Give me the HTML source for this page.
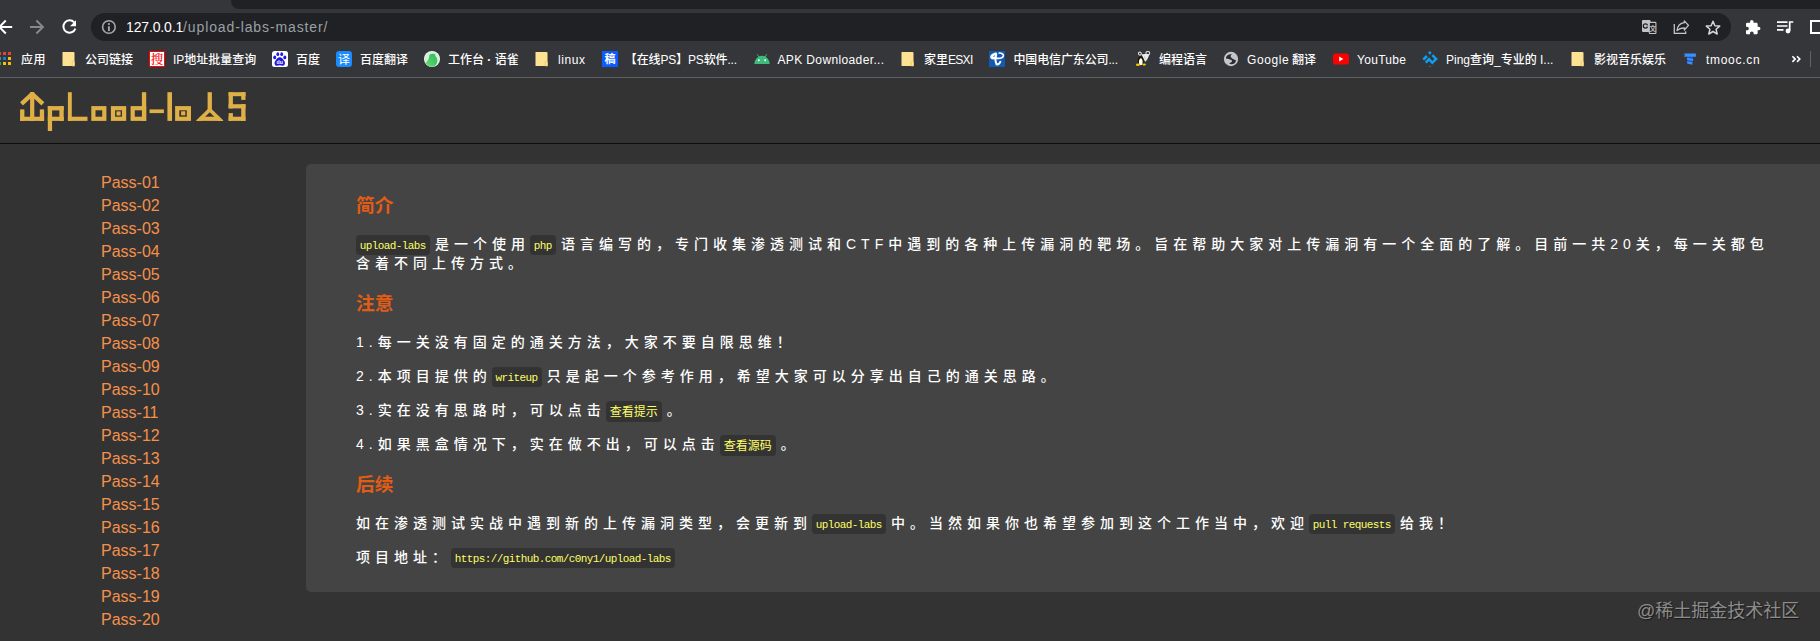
<!DOCTYPE html>
<html lang="zh-CN">
<head>
<meta charset="utf-8">
<title>upload-labs</title>
<style>
html,body{margin:0;padding:0;}
body{width:1820px;height:641px;overflow:hidden;background:#333333;position:relative;font-family:"Liberation Sans","Noto Sans CJK SC",sans-serif;}
.abs{position:absolute;}
/* ---------- browser chrome ---------- */
#chrome{position:absolute;left:0;top:0;width:1820px;height:78px;background:#35363a;}
#tabstrip{position:absolute;left:231px;top:0;width:1589px;height:9px;background:#202124;border-bottom-left-radius:8px;}
#omni{position:absolute;left:91px;top:13px;width:1640px;height:28px;border-radius:14px;background:#202124;}
#url{position:absolute;left:126px;top:18px;font-size:14px;line-height:18px;color:#9aa0a6;white-space:nowrap;letter-spacing:0px;}
#url b{font-weight:normal;color:#ffffff;letter-spacing:-.15px;}
#url span{letter-spacing:.88px;}
#bmline{position:absolute;left:0;top:77px;width:1820px;height:1px;background:#5f6064;}
.bm{position:absolute;top:52px;height:17px;line-height:17px;font-size:12px;font-weight:500;color:#ffffff;white-space:nowrap;font-family:"Liberation Sans","Noto Sans CJK SC",sans-serif;}
.ic{position:absolute;top:51px;width:16px;height:16px;}
.sou{box-sizing:border-box;border:1px solid #ff0000;background:#fff;color:#ff0000;font-size:12.500px;line-height:14px;text-align:center;font-family:"Noto Serif CJK SC","Noto Sans CJK SC",serif;font-weight:500;overflow:hidden;}
.yi{background:#1a8cff;border-radius:3px;color:#fff;font-size:12px;line-height:15px;text-align:center;font-family:"Noto Sans CJK SC",sans-serif;}
.gao{background:#0a5cff;color:#fff;font-size:11px;font-weight:700;line-height:15px;text-align:center;font-family:"Noto Sans CJK SC",sans-serif;}
/* ---------- page ---------- */
#head{position:absolute;left:0;top:78px;width:1820px;height:65px;background:#333333;border-bottom:1px solid #0d0d0d;}
#menu{position:absolute;left:101px;top:171px;margin:0;padding:0;list-style:none;}
#menu li{height:23px;line-height:23px;font-size:16px;color:#f3914b;white-space:nowrap;}
#panel{position:absolute;left:306px;top:164px;width:1530px;height:428px;background:#444444;border-radius:5px;}
#panel h3{position:absolute;left:50px;margin:0;font-size:18.720px;line-height:24px;color:#e35c14;font-weight:bold;font-family:"Liberation Sans","Noto Sans CJK SC",sans-serif;}
#panel p{position:absolute;left:50px;margin:0;font-size:14px;line-height:20px;font-weight:500;color:#ffffff;letter-spacing:5px;white-space:nowrap;}
code{font-family:"Liberation Mono","Noto Sans CJK SC",monospace;font-weight:400;font-size:11px;letter-spacing:-.6px;color:#ffff66;background:#333333;border-radius:4px;padding:4.830px 4.300px 2.900px 3.700px;margin-right:5px;}
code.zh{font-size:12px;letter-spacing:0;padding:5px 4px 1.500px 4px;vertical-align:-1px;}
#wm{position:absolute;left:1637px;top:599px;font-size:18px;line-height:24px;color:#8c8c8c;white-space:nowrap;text-shadow:1px 1px 1px rgba(0,0,0,.55);}
</style>
</head>
<body>
<div id="chrome">
  <div id="tabstrip"></div>
  <div id="omni"></div>
  <div id="url"><b>127.0.0.1</b><span>/upload-labs-master/</span></div>
  <svg class="abs" style="left:0;top:0" width="1820" height="44" viewBox="0 0 1820 44" fill="none">
    <!-- back -->
    <path d="M12.200 27H-0.500M5.800 20.500L-0.700 27l6.500 6.500" stroke="#ffffff" stroke-width="2"/>
    <!-- forward -->
    <path d="M30 27h12.600M36.400 20.500l6.500 6.500l-6.500 6.500" stroke="#85888c" stroke-width="2"/>
    <!-- reload -->
    <path d="M74.200 22.300A6.200 6.200 0 1 0 75.400 28.700" stroke="#ffffff" stroke-width="2"/>
    <path d="M76 20.300v6h-6z" fill="#ffffff"/>
    <!-- info -->
    <circle cx="108.900" cy="27" r="6.300" stroke="#a4a8ad" stroke-width="1.600"/>
    <path d="M108.900 26.300v4.800" stroke="#a4a8ad" stroke-width="1.900"/><circle cx="108.900" cy="24.100" r="1.050" fill="#a4a8ad"/>
    <!-- translate -->
    <rect x="1642" y="20" width="8.600" height="12" rx="1.100" fill="#c1c3c6"/>
    <circle cx="1645.400" cy="26" r="2.100" stroke="#202124" stroke-width="1.300"/>
    <rect x="1646.400" y="25.300" width="2.200" height="1.300" fill="#c1c3c6"/>
    <rect x="1649.300" y="22.400" width="6.600" height="11.100" rx=".6" fill="#202124" stroke="#c1c3c6" stroke-width="1.100"/>
    <text x="1649.500" y="31.300" font-family="Noto Sans CJK SC, sans-serif" font-size="6.500" font-weight="700" fill="#c1c3c6">文</text>
    <!-- share -->
    <path d="M1674.300 23.900v9.400h11.400v-2" stroke="#c4c7cb" stroke-width="1.250"/>
    <path d="M1677 30.600c.5-4.200 3-7.400 7.300-7.900v-1.900l4.200 4.600l-4.200 4.600v-2.200c-3.200 0-5.400.8-7.300 2.800z" stroke="#c4c7cb" stroke-width="1.250" stroke-linejoin="round"/>
    <!-- star -->
    <path d="M1713 21.300l1.900 4.400l4.800.4l-3.600 3.200l1.100 4.700l-4.200-2.500l-4.200 2.500l1.100-4.700l-3.600-3.200l4.800-.4z" stroke="#d3d5d9" stroke-width="1.500" stroke-linejoin="round"/>
    <!-- puzzle -->
    <svg x="1744.600" y="19.200" width="16.500" height="16.500" viewBox="0 0 24 24"><path d="M20.500 11H19V7c0-1.100-.9-2-2-2h-4V3.500C13 2.120 11.880 1 10.500 1S8 2.120 8 3.500V5H4c-1.100 0-1.990.9-1.990 2v3.800H3.500c1.490 0 2.700 1.210 2.700 2.700s-1.210 2.700-2.700 2.700H2V20c0 1.100.9 2 2 2h3.800v-1.500c0-1.490 1.210-2.700 2.700-2.700 1.490 0 2.700 1.210 2.700 2.700V22H17c1.100 0 2-.9 2-2v-4h1.500c1.380 0 2.500-1.120 2.500-2.500S21.880 11 20.500 11z" fill="#ffffff"/></svg>
    <!-- playlist -->
    <path d="M1777 22.200h10.500M1777 26h10.500M1777 29.800h6.500" stroke="#ffffff" stroke-width="1.700"/>
    <path d="M1789.700 21.300v9.500M1789 22h4.300" stroke="#ffffff" stroke-width="1.700"/>
    <circle cx="1788" cy="31" r="2.400" fill="#ffffff"/>
    <!-- side panel -->
    <rect x="1811" y="21" width="14" height="12" stroke="#ffffff" stroke-width="2"/>
  </svg>
  <div id="bmline"></div>
  <!-- bookmarks -->
  <svg class="ic" style="left:-2px" viewBox="0 0 16 16"><g>
    <rect x="0" y="1" width="3" height="3" fill="#ea4335"/><rect x="5" y="1" width="3" height="3" fill="#ea4335"/><rect x="10" y="1" width="3" height="3" fill="#ea4335"/>
    <rect x="0" y="6" width="3" height="3" fill="#34a853"/><rect x="5" y="6" width="3" height="3" fill="#1a73e8"/><rect x="10" y="6" width="3" height="3" fill="#fbbc04"/>
    <rect x="0" y="11" width="3" height="3" fill="#34a853"/><rect x="5" y="11" width="3" height="3" fill="#fbbc04"/><rect x="10" y="11" width="3" height="3" fill="#fbbc04"/></g></svg>
  <span class="bm" style="left:21px;letter-spacing:.5px">应用</span>
  <svg class="ic fo" style="left:60.400px" viewBox="0 0 16 16"><path d="M3 1h10.500a1 1 0 0 1 1 1v12.500a.5.500 0 0 1-.5.500H3a.5.500 0 0 1-.5-.5V1.500A.5.500 0 0 1 3 1z" fill="#fde293"/><path d="M12.200 10.700h2.300v4.300h-2.300z" fill="#fde9a9" stroke="#e6c25c" stroke-width=".7"/></svg>
  <span class="bm" style="left:85px">公司链接</span>
  <span class="ic sou" style="left:149px">搜</span>
  <span class="bm" style="left:173px">IP地址批量查询</span>
  <svg class="ic" style="left:272px" viewBox="0 0 16 16"><rect width="16" height="16" rx="2.500" fill="#fff"/><g fill="#2319dc"><ellipse cx="2.700" cy="6.400" rx="1.500" ry="1.850"/><ellipse cx="5.800" cy="3.200" rx="1.400" ry="1.900"/><ellipse cx="9.700" cy="3.200" rx="1.400" ry="1.900"/><ellipse cx="12.800" cy="6.400" rx="1.500" ry="1.850"/><path d="M7.750 6.200c2 0 3 1.600 4.200 3.200c1.600 1.800 1.500 5.300-1.600 5.300c-1 0-1.700-.4-2.600-.4s-1.600.4-2.600.4c-3.100 0-3.200-3.500-1.600-5.300C4.750 7.800 5.750 6.200 7.750 6.200z"/></g><text x="7.750" y="13.200" text-anchor="middle" font-family="Liberation Sans, sans-serif" font-size="5.200" font-weight="bold" fill="#fff">du</text></svg>
  <span class="bm" style="left:296px">百度</span>
  <span class="ic yi" style="left:336px">译</span>
  <span class="bm" style="left:360px">百度翻译</span>
  <svg class="ic" style="left:424px" viewBox="0 0 16 16"><defs><clipPath id="yq"><circle cx="8" cy="8" r="7.700"/></clipPath><linearGradient id="yg" x1="0" y1="1" x2="1" y2="0"><stop offset="0" stop-color="#74e07f"/><stop offset=".55" stop-color="#45c863"/><stop offset="1" stop-color="#3bbd5b"/></linearGradient></defs><circle cx="8" cy="8" r="8" fill="#eef9f0"/><circle cx="8" cy="8" r="7.300" fill="#d5f1dc"/><path clip-path="url(#yq)" d="M5.600 3.400C7 2.600 9.500 2.400 11.200 3.200C11 4.200 11.400 5 12 5.800C13 7.200 13.600 9 13.200 11C12.700 13.600 10.800 15.400 8.400 16.200C5.400 16.600 2.400 15.200 .8 12.600C2.600 11 4.200 9 4.800 7.200C5.200 5.800 5 4.600 5.600 3.400z" fill="url(#yg)"/></svg>
  <span class="bm" style="left:448px">工作台 <b>·</b> 语雀</span>
  <svg class="ic fo" style="left:533.300px" viewBox="0 0 16 16"><path d="M3 1h10.500a1 1 0 0 1 1 1v12.500a.5.500 0 0 1-.5.500H3a.5.500 0 0 1-.5-.5V1.500A.5.500 0 0 1 3 1z" fill="#fde293"/><path d="M12.200 10.700h2.300v4.300h-2.300z" fill="#fde9a9" stroke="#e6c25c" stroke-width=".7"/></svg>
  <span class="bm" style="left:558px;letter-spacing:.6px">linux</span>
  <span class="ic gao" style="left:602px">稿</span>
  <span class="bm" style="left:624.800px;letter-spacing:-.14px">【在线PS】PS软件...</span>
  <svg class="ic" style="left:753.500px" viewBox="0 0 16 16"><path d="M.3 13a7.700 8.300 0 0 1 15.400 0z" fill="#3dbb7c"/><path d="M3.500 3.500l1.600 2.700M12.500 3.500l-1.600 2.700" stroke="#3dbb7c" stroke-width=".9" stroke-linecap="round"/><circle cx="4.800" cy="9.300" r="1" fill="#fff"/><circle cx="11.200" cy="9.300" r="1" fill="#fff"/></svg>
  <span class="bm" style="left:777.500px;letter-spacing:.37px">APK Downloader...</span>
  <svg class="ic fo" style="left:899.400px" viewBox="0 0 16 16"><path d="M3 1h10.500a1 1 0 0 1 1 1v12.500a.5.500 0 0 1-.5.500H3a.5.500 0 0 1-.5-.5V1.500A.5.500 0 0 1 3 1z" fill="#fde293"/><path d="M12.200 10.700h2.300v4.300h-2.300z" fill="#fde9a9" stroke="#e6c25c" stroke-width=".7"/></svg>
  <span class="bm" style="left:924px">家里<span style="letter-spacing:-.7px">ESXI</span></span>
  <svg class="ic" style="left:989px" viewBox="0 0 16 16"><rect width="16" height="16" fill="#1259b3"/><g fill="none" stroke="#fff" stroke-linecap="round"><path d="M6.800 2.800C4 3.400 2.200 5 2.500 6.300C2.900 7.500 4.800 7.400 6.800 6.600" stroke-width="2.700"/><path d="M10.200 2C13 2.100 14.700 3.400 14.300 5C13.700 6.900 10.600 7.700 7.200 7.300" stroke-width="1.700"/><path d="M7.300 3.600C6.200 6 6.200 10 7.500 13.200C9.100 13.800 10.700 12.700 11.300 10.800" stroke-width="2"/></g></svg>
  <span class="bm" style="left:1013.500px;letter-spacing:-.14px">中国电信广东公司...</span>
  <svg class="ic" style="left:1135px" viewBox="0 0 16 16"><g fill="none" stroke="#d6d6d6" stroke-width="1.100"><circle cx="4.900" cy="2.600" r="1.500"/><circle cx="12.800" cy="2.300" r="1.900"/></g><path d="M6.600 3.600c1.400-.6 5.600-.8 7.600 0c-.6 2.600-2 5.400-3.800 7.200c-1.400-1.800-2.800-4.600-3.800-7.200z" fill="#ececec"/><path d="M9.400 5.200l1 3.200" stroke="#b0b0b0" stroke-width=".6"/><ellipse cx="5.800" cy="10" rx="2.900" ry="4.700" fill="#111"/><ellipse cx="5.800" cy="11" rx="1.850" ry="3.300" fill="#fff"/><ellipse cx="5.800" cy="7.600" rx="1" ry=".7" fill="#f6c200"/><ellipse cx="3" cy="13.800" rx="2.100" ry="1.200" fill="#f6c200"/><ellipse cx="9.100" cy="13.600" rx="1.900" ry="1.100" fill="#f6c200"/></svg>
  <span class="bm" style="left:1159px">编程语言</span>
  <svg class="ic" style="left:1223px" viewBox="0 0 16 16"><circle cx="8" cy="8" r="7.150" fill="#c3c6cb"/><path d="M3 7.400C2.900 5.400 4.600 3.200 8.900 3C8 3.800 7.600 4.800 7.700 5.600C7.800 6.400 8.400 7 9.200 7.500C10.400 8 11.600 8.800 12.900 9.200C13 11.200 11.400 12.900 9.600 13.100C8.200 13.300 6.800 12.900 6 12.200C7.400 12 8.600 11.400 9 10.600C9.200 9.900 8.800 9.300 8 8.800C6.800 8.100 5 7.500 3 7.400z" fill="#2b2c30"/></svg>
  <span class="bm" style="left:1247px"><span style="letter-spacing:.62px">Google</span><span style="letter-spacing:-.8px"> </span>翻译</span>
  <svg class="ic" style="left:1333px" viewBox="0 0 16 16"><rect x="0" y="2.400" width="16" height="11.200" rx="2.800" fill="#ff0000"/><path d="M6.200 5.400l4.100 2.600l-4.100 2.600z" fill="#fff"/></svg>
  <span class="bm" style="left:1357px;letter-spacing:.3px">YouTube</span>
  <svg class="ic" style="left:1422px" viewBox="0 0 16 16"><path d="M7.850 0l1.850 1.850L7.850 3.700L6 1.850z" fill="#0d9ff0"/><g fill="none" stroke="#0d9ff0" stroke-width="2.500"><path d="M1.200 8.700L4.900 5"/><path d="M3.800 11.700L7 8.100L10.300 11.800L14.100 8L10.300 4.100"/></g><rect x="7.300" y="14.900" width="1.400" height=".9" fill="#0d9ff0"/></svg>
  <span class="bm" style="left:1446px">Ping查询_专业的 I...</span>
  <svg class="ic fo" style="left:1569.400px" viewBox="0 0 16 16"><path d="M3 1h10.500a1 1 0 0 1 1 1v12.500a.5.500 0 0 1-.5.500H3a.5.500 0 0 1-.5-.5V1.500A.5.500 0 0 1 3 1z" fill="#fde293"/><path d="M12.200 10.700h2.300v4.300h-2.300z" fill="#fde9a9" stroke="#e6c25c" stroke-width=".7"/></svg>
  <span class="bm" style="left:1594px">影视音乐娱乐</span>
  <svg class="ic" style="left:1682px" viewBox="0 0 16 16"><path d="M5.100 5.600h6v2.600l-6-1.200z" fill="#1c54d6"/><path d="M5.100 8.800l6 1l-.7 1.600l-5.300-1z" fill="#1c54d6"/><path d="M2 2.400h11.900v3.400H2l.9-1.700z" fill="#3d8ffc"/><path d="M5.100 6.800L11.100 8v1.900L5.100 8.900z" fill="#3d8ffc"/><path d="M5.100 10.200l5.300 1v2.600l-5.300-1.300z" fill="#3d8ffc"/></svg>
  <span class="bm" style="left:1706px;letter-spacing:.7px">tmooc.cn</span>
  <svg class="abs" style="left:1791px;top:54px" width="11" height="10" viewBox="0 0 11 10"><path d="M1.400 2.300l2.800 2.800l-2.800 2.800M6 2.300l2.800 2.800l-2.800 2.800" fill="none" stroke="#ffffff" stroke-width="1.600"/></svg>
  <div class="abs" style="left:1810px;top:51px;width:1px;height:16px;background:#5f6368"></div>
</div>
<div id="head">
  <svg class="abs" style="left:0;top:-1px" width="270" height="66" viewBox="0 77 270 66" role="img" aria-label="upload-labs">
    <title>upload-labs</title>
    <clipPath id="cl"><rect x="0" y="91.900" width="270" height="60"/></clipPath><clipPath id="cl2"><rect x="190" y="100" width="40" height="20.900"/></clipPath>
    <g fill="#deb047" stroke="none">
      <!-- arrow + tray -->
      <rect x="30.100" y="92.200" width="4.200" height="28.700"/>
      <rect x="20.100" y="109.400" width="4.300" height="11.500"/>
      <rect x="39.800" y="109.400" width="4.300" height="11.500"/>
      <rect x="20.100" y="116.700" width="24" height="4.200"/>
      <g stroke="#deb047" stroke-width="4.300" fill="none" clip-path="url(#cl)"><line x1="33.300" y1="92.900" x2="21.500" y2="103.800"/><line x1="31.100" y1="92.900" x2="42.900" y2="103.800"/></g>
      <!-- p -->
      <rect x="47.800" y="106.100" width="4.300" height="24.900"/>
      <rect x="47.800" y="106.100" width="15.900" height="4.300"/>
      <rect x="59.400" y="106.100" width="4.300" height="14.800"/>
      <rect x="47.800" y="116.700" width="15.900" height="4.200"/>
      <!-- L -->
      <rect x="67.900" y="92.200" width="3.900" height="28.700"/>
      <rect x="67.900" y="116.700" width="19.600" height="4.200"/>
      <!-- o -->
      <rect x="93.400" y="108.200" width="10.900" height="10.600" fill="none" stroke="#deb047" stroke-width="4.200"/>
      <!-- o. -->
      <rect x="113" y="108.200" width="11.100" height="10.600" fill="none" stroke="#deb047" stroke-width="4.200"/>
      <rect x="116.500" y="111.400" width="4.100" height="4.100"/>
      <!-- d -->
      <rect x="132.700" y="108.200" width="11.400" height="10.600" fill="none" stroke="#deb047" stroke-width="4.200"/>
      <rect x="141.900" y="92.200" width="4.300" height="28.700"/>
      <!-- dash -->
      <rect x="149.500" y="109.400" width="14.400" height="3.700"/>
      <!-- l -->
      <rect x="167.400" y="92.200" width="4.600" height="28.700"/>
      <!-- o. -->
      <rect x="177.200" y="108.200" width="11.700" height="10.600" fill="none" stroke="#deb047" stroke-width="4.200"/>
      <rect x="181.100" y="111.300" width="4.200" height="4"/>
      <!-- A -->
      <rect x="207.600" y="92.200" width="4.300" height="19"/>
      <rect x="199.900" y="116.700" width="19.700" height="4.200"/>
      <g stroke="#deb047" stroke-width="3.700" fill="none" clip-path="url(#cl2)"><line x1="209.750" y1="109.750" x2="197.400" y2="121.940"/><line x1="209.750" y1="109.750" x2="222.100" y2="121.940"/></g>
      <!-- S -->
      <rect x="228.600" y="92.200" width="16.900" height="4"/>
      <rect x="241.200" y="92.200" width="4.300" height="7.700"/>
      <rect x="228.600" y="92.200" width="4.300" height="16.200"/>
      <rect x="228.600" y="104.200" width="16.900" height="4.200"/>
      <rect x="241.200" y="104.200" width="4.300" height="16.700"/>
      <rect x="228.600" y="116.700" width="16.900" height="4.200"/>
      <rect x="228.600" y="113.100" width="4.300" height="7.800"/>
    </g>
  </svg>
</div>
<ul id="menu">
<li>Pass-01</li><li>Pass-02</li><li>Pass-03</li><li>Pass-04</li><li>Pass-05</li>
<li>Pass-06</li><li>Pass-07</li><li>Pass-08</li><li>Pass-09</li><li>Pass-10</li>
<li>Pass-11</li><li>Pass-12</li><li>Pass-13</li><li>Pass-14</li><li>Pass-15</li>
<li>Pass-16</li><li>Pass-17</li><li>Pass-18</li><li>Pass-19</li><li>Pass-20</li>
</ul>
<div id="panel">
  <h3 style="top:30px">简介</h3>
  <p style="top:70px"><code>upload-labs</code>是一个使用<code>php</code>语言编写的，专门收集渗透测试和CTF中遇到的各种上传漏洞的靶场。旨在帮助大家对上传漏洞有一个全面的了解。目前一共20关，每一关都包</p>
  <p style="top:89px">含着不同上传方式。</p>
  <h3 style="top:128px">注意</h3>
  <p style="top:168px">1.每一关没有固定的通关方法，大家不要自限思维！</p>
  <p style="top:202px">2.本项目提供的<code>writeup</code>只是起一个参考作用，希望大家可以分享出自己的通关思路。</p>
  <p style="top:236px">3.实在没有思路时，可以点击<code class="zh">查看提示</code>。</p>
  <p style="top:270px">4.如果黑盒情况下，实在做不出，可以点击<code class="zh">查看源码</code>。</p>
  <h3 style="top:309px">后续</h3>
  <p style="top:349px">如在渗透测试实战中遇到新的上传漏洞类型，会更新到<code>upload-labs</code>中。当然如果你也希望参加到这个工作当中，欢迎<code>pull requests</code>给我！</p>
  <p style="top:383px">项目地址：<code>https://github.com/c0ny1/upload-labs</code></p>
</div>
<div id="wm">@稀土掘金技术社区</div>
</body>
</html>
